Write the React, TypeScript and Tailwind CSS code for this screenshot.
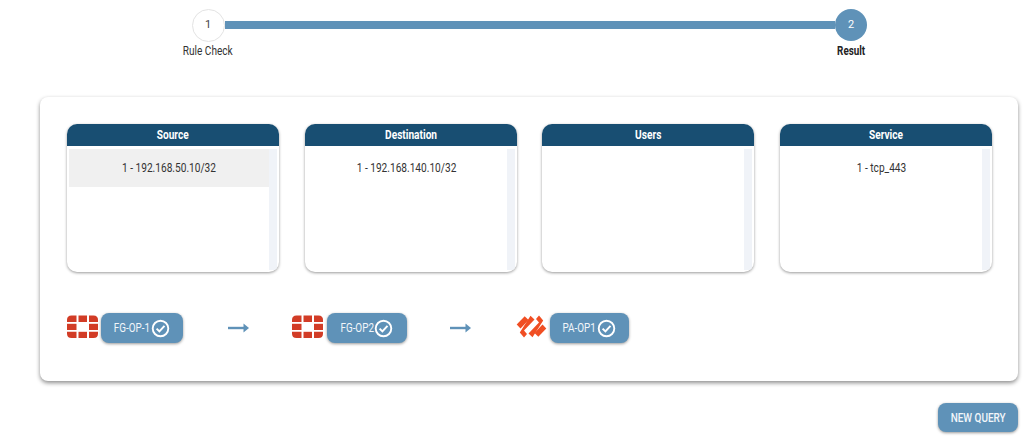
import React from "react";

const Check = () => (
  <svg width="19" height="19" viewBox="0 0 19 19" fill="none" className="shrink-0 ml-[1px]">
    <circle cx="9.5" cy="9.5" r="7.8" stroke="#fff" strokeWidth="1.9" />
    <path d="M5.6 9.6 8.4 12.4 13.5 6.8" stroke="#fff" strokeWidth="2" />
  </svg>
);

const Fortinet = () => (
  <svg width="31" height="24" viewBox="0 0 31 24" className="shrink-0 -mt-[2px]" fill="#d23c26">
    <path d="M0 5Q0 0.5 4.5 0.5H9.5V7H0Z" />
    <rect x="11.5" y="0.5" width="8.5" height="6.5" />
    <path d="M22 0.5H26.5Q31 0.5 31 5V7H22Z" />
    <rect x="0" y="8.8" width="9.5" height="6.2" />
    <rect x="22" y="8.8" width="9" height="6.2" />
    <path d="M0 16.8H9.5V23H4.5Q0 23 0 18.5Z" />
    <rect x="11.5" y="16.8" width="8.5" height="6.2" />
    <path d="M22 16.8H31V18.5Q31 23 26.5 23H22Z" />
  </svg>
);

const PaloAlto = () => (
  <svg width="31" height="24" viewBox="0 0 31 24" className="shrink-0 -mt-[2px]" fill="#f04e23">
    <path d="M0.7 9.5 8.7 1.2 12.5 5 4.5 13.5Z" />
    <path d="M14.5 0.8 18.5 4.5 8 15.5 11 19 8 22.5 3.8 17.5Z" />
    <path d="M16.5 22.2 12.5 18.5 23 7.5 20 4 23 0.5 27.2 5.5Z" />
    <path d="M30.3 13.5 22.3 21.8 18.5 18 26.5 9.5Z" />
  </svg>
);

const Arrow = () => (
  <svg width="21" height="10" viewBox="0 0 21 10" className="shrink-0 -mt-[1px]">
    <rect x="0" y="3.8" width="17" height="2.4" fill="#5f92b8" />
    <path d="M15.5 0.5 21 5 15.5 9.5Z" fill="#5f92b8" />
  </svg>
);

const Panel = ({ title, item, selected }: { title: string; item?: string; selected?: boolean }) => (
  <div className="w-[212px] h-[148px] rounded-[10px] bg-white shadow-[0_1px_3px_rgba(0,0,0,0.4)] overflow-hidden">
    <div className="h-[22px] bg-[#184e72] text-white text-[12.5px] font-bold flex items-center justify-center">
      <span className="inline-block scale-x-[0.81]">{title}</span>
    </div>
    <div className="flex h-[121px] mt-[3px] px-[2px]">
      <div className="flex-1">
        {item && (
          <div className={`h-[38px] flex items-center justify-center text-[12.5px] text-[#333] ${selected ? "bg-[#f0f0f0]" : ""}`}>
            <span className="inline-block scale-x-[0.81]">{item}</span>
          </div>
        )}
      </div>
      <div className="w-[8px] bg-[#f0f3f8]" />
    </div>
  </div>
);

const Node = ({ label, w }: { label: string; w: string }) => (
  <div className={`${w} h-[30px] rounded-[8px] bg-[#5f92b8] shadow-[0_1px_3px_rgba(0,0,0,0.4)] flex items-center justify-center text-[#f2f6fa] text-[12.5px]`}>
    <span className="inline-block scale-x-[0.79] -mx-[5px]">{label}</span>
    <Check />
  </div>
);

export default function App() {
  return (
    <div className="w-[1024px] h-[437px] bg-white overflow-hidden font-['Roboto',sans-serif] flex flex-col">
      <div className="ml-[183px] mt-[9px] w-[684px] flex">
        <div className="w-[50px] flex flex-col items-center shrink-0">
          <div className="w-[33px] h-[33px] rounded-full border border-[#e3e3e3] flex items-center justify-center text-[11px] text-[#444]">1</div>
          <div className="text-[12px] leading-[14px] mt-[2px] text-[#333] whitespace-nowrap scale-x-[0.84]">Rule Check</div>
        </div>
        <div className="w-[610px] h-[8px] mt-[12px] -ml-[8px] shrink-0 bg-[#5f92b8]" />
        <div className="w-[32px] flex flex-col items-center shrink-0">
          <div className="w-[32px] h-[32px] rounded-full bg-[#5f92b8] flex items-center justify-center text-[11px] text-white">2</div>
          <div className="text-[12px] leading-[14px] mt-[3px] font-bold text-[#222] scale-x-[0.82]">Result</div>
        </div>
      </div>

      <div className="ml-[40px] mt-[39px] w-[978px] h-[284px] rounded-[8px] bg-white shadow-[0_2px_4px_rgba(0,0,0,0.45)] px-[27px] pt-[27px]">
        <div className="flex justify-between w-[925px]">
          <Panel title="Source" item="1 - 192.168.50.10/32" selected />
          <Panel title="Destination" item="1 - 192.168.140.10/32" />
          <Panel title="Users" />
          <Panel title="Service" item="1 - tcp_443" />
        </div>
        <div className="flex items-center mt-[41px] h-[30px]">
          <Fortinet />
          <div className="w-[3px]" />
          <Node label="FG-OP-1" w="w-[82px]" />
          <div className="w-[45px]" />
          <Arrow />
          <div className="w-[43px]" />
          <Fortinet />
          <div className="w-[4px]" />
          <Node label="FG-OP2" w="w-[80px]" />
          <div className="w-[43px]" />
          <Arrow />
          <div className="w-[45px]" />
          <PaloAlto />
          <div className="w-[3px]" />
          <Node label="PA-OP1" w="w-[79px]" />
        </div>
      </div>

      <div className="ml-[938px] mt-[22px] w-[80px] h-[29px] rounded-[8px] bg-[#5f92b8] shadow-[0_1px_3px_rgba(0,0,0,0.4)] flex items-center justify-center text-[#f2f6fa] text-[12px] font-medium">
        <span className="inline-block scale-x-[0.83]">NEW QUERY</span>
      </div>
    </div>
  );
}
